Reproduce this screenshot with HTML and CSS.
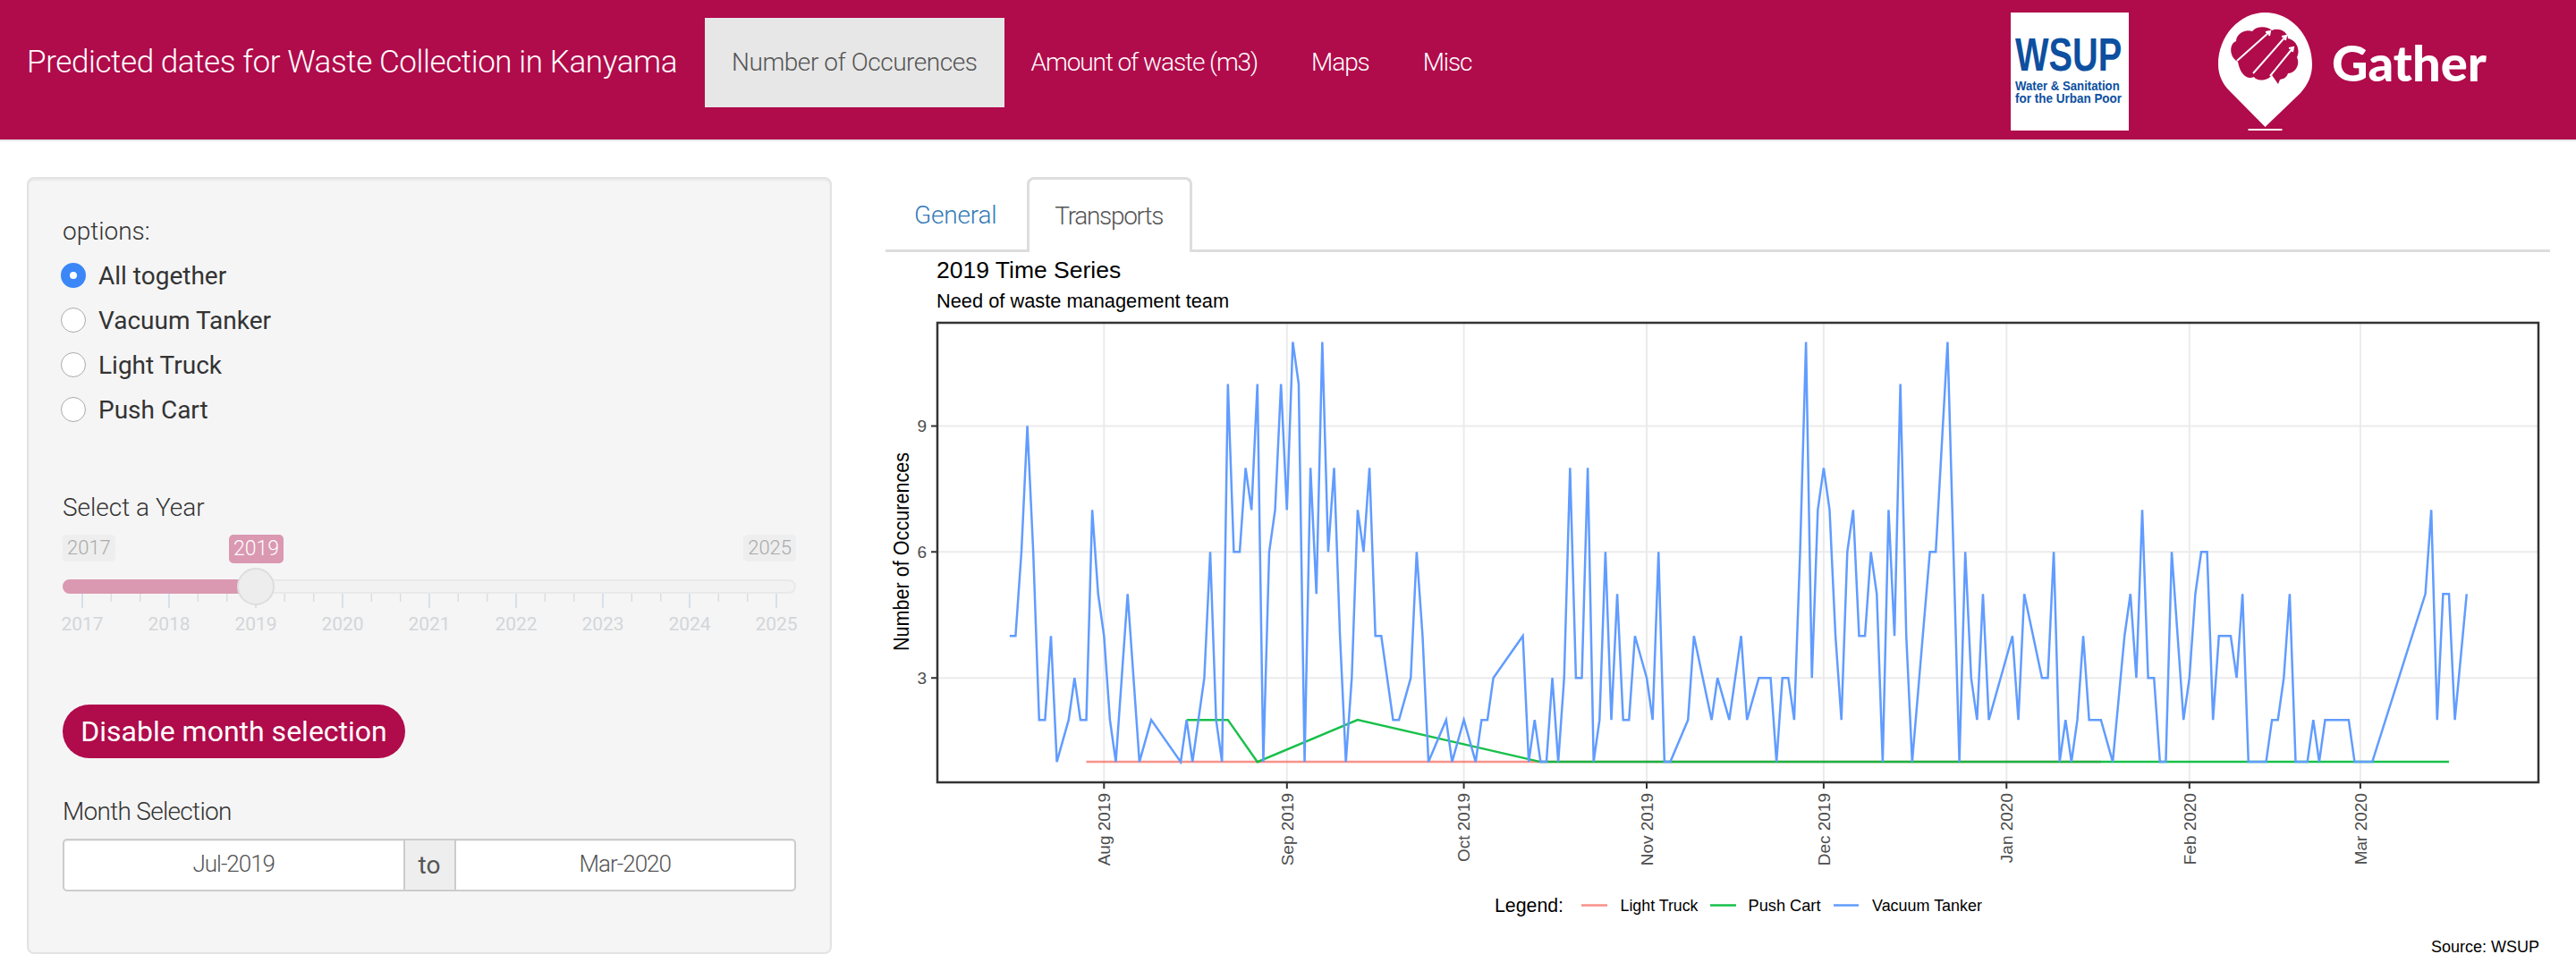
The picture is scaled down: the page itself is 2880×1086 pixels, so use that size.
FILE: index.html
```html
<!DOCTYPE html>
<html lang="en">
<head>
    <meta charset="UTF-8">
    <title>Predicted dates for Waste Collection in Kanyama</title>
    <link rel="stylesheet" href="styles.css">
</head>
<body>
    <nav class="navbar">
        <div class="brand">Predicted dates for Waste Collection in Kanyama</div>
        <a class="nav-item active">Number of Occurences</a>
        <a class="nav-item">Amount of waste (m3)</a>
        <a class="nav-item">Maps</a>
        <a class="nav-item">Misc</a>
        <div class="wsup-logo">
            <svg viewBox="0 0 132 132" width="132" height="132">
                <text class="wsup-big" transform="translate(5 65) scale(.78 1)">WSUP</text>
                <text class="wsup-small" transform="translate(5 87) scale(.88 1)">Water &amp; Sanitation</text>
                <text class="wsup-small" transform="translate(5 101) scale(.9 1)">for the Urban Poor</text>
            </svg>
        </div>
        <div class="gather-logo">
            <svg class="pin" viewBox="0 0 105 132" width="105" height="132">
                <path class="pin-body" d="M52.5 0C81 0 105 26 105 58C105 71 100 81 92 90L52.5 128L13 88C5 80 0 70 0 58C0 26 24 0 52.5 0Z"/>
                <rect class="pin-body" x="33.500" y="130" width="38" height="2"/>
                <path class="pin-brain" d="M22 55C12 50 12 35 20 32C20 24 30 18 38 21C44 14 56 16 60 20C68 16 78 22 78 29C88 31 92 42 88 50C92 58 86 68 78 68C76 74 72 74 69 75L67 80L60 70C54 78 42 76 40 72C32 76 24 68 22 55Z"/>
                <path class="pin-arrow" d="M21 54L58 21M53 22L58 21L57 26M39 68L76 26M71 27L76 26L75 31M58 71L84 39M79 40L84 39L83 44"/>
            </svg>
            <span class="gather-name">Gather</span>
        </div>
    </nav>

    <div class="content">
        <aside class="well">
            <div class="field-label options-label">options:</div>
            <label class="radio"><input type="radio" name="opt" checked>All together</label>
            <label class="radio"><input type="radio" name="opt">Vacuum Tanker</label>
            <label class="radio"><input type="radio" name="opt">Light Truck</label>
            <label class="radio"><input type="radio" name="opt">Push Cart</label>

            <div class="field-label year-label">Select a Year</div>
            <div class="slider">
                <div class="slider-ends">
                    <span class="slider-end">2017</span>
                    <span class="slider-end">2025</span>
                </div>
                <span class="slider-value">2019</span>
                <div class="slider-track">
                    <div class="slider-fill"></div>
                    <div class="slider-handle"></div>
                </div>
                <svg class="slider-ticks" viewBox="0 0 820 16" width="820" height="16">
                    <path class="tick-major" d="M22 0V16M119 0V16M216 0V16M313 0V16M410 0V16M507 0V16M604 0V16M701 0V16M798 0V16"/>
                    <path class="tick-minor" d="M54.300 0V9M86.700 0V9M151.300 0V9M183.700 0V9M248.300 0V9M280.700 0V9M345.300 0V9M377.700 0V9M442.300 0V9M474.700 0V9M539.300 0V9M571.700 0V9M636.300 0V9M668.700 0V9M733.300 0V9M765.700 0V9"/>
                </svg>
                <div class="slider-labels">
                    <span>2017</span><span>2018</span><span>2019</span><span>2020</span><span>2021</span><span>2022</span><span>2023</span><span>2024</span><span>2025</span>
                </div>
            </div>

            <button class="pill">Disable month selection</button>

            <div class="field-label month-label">Month Selection</div>
            <div class="date-range">
                <div class="date-input">Jul-2019</div>
                <div class="date-to">to</div>
                <div class="date-input">Mar-2020</div>
            </div>
        </aside>

        <main class="tab-area">
            <div class="tabs">
                <a class="tab">General</a>
                <a class="tab selected">Transports</a>
            </div>
            <svg class="plot" viewBox="990 282 1861 804" width="1861" height="804">
                <text class="plot-title" x="1047" y="311">2019 Time Series</text>
                <text class="plot-sub" x="1047" y="344">Need of waste management team</text>

                <path class="grid" d="M1048 476.400H2838M1048 617.300H2838M1048 758.200H2838M1234.300 361V875M1438.800 361V875M1636.600 361V875M1841 361V875M2038.900 361V875M2243.300 361V875M2447.800 361V875M2638.900 361V875"/>

                <g transform="translate(1128.8 899.06) scale(6.595 -46.96)">
                    <polyline class="line red" points="13,1 185,1"/>
                    <polyline class="line green" points="30,2 37,2 42,1 59,2 90,1 244,1"/>
                    <polyline class="line blue" points="0,4 1,4 2,6 3,9 4,6 5,2 6,2 7,4 8,1 10,2 11,3 12,2 13,2 14,7 15,5 16,4 17,2 18,1 19,3 20,5 21,3 22,1 24,2 29,1 30,2 31,1 33,3 34,6 35,2 36,1 37,10 38,6 39,6 40,8 41,7 42,10 43,1 44,6 45,7 46,10 47,7 48,11 49,10 50,1 51,8 52,5 53,11 54,6 55,8 56,4 57,1 58,3 59,7 60,6 61,8 62,4 63,4 65,2 66,2 68,3 69,6 70,4 71,1 74,2 75,1 77,2 79,1 80,2 81,2 82,3 87,4 88,1 89,2 90,1 91,1 92,3 93,1 94,3 95,8 96,3 97,3 98,8 99,1 100,2 101,6 102,2 103,5 104,2 105,2 106,4 108,3 109,2 110,6 111,1 112,1 115,2 116,4 119,2 120,3 122,2 124,4 125,2 127,3 129,3 130,1 131,3 132,3 133,2 134,6 135,11 136,3 137,7 138,8 139,7 140,4 141,2 142,6 143,7 144,4 145,4 146,6 147,5 148,1 149,7 150,4 151,10 152,4 153,1 156,6 157,6 159,11 160,6 161,1 162,6 163,3 164,2 165,5 166,2 170,4 171,2 172,5 175,3 176,3 177,6 178,1 179,2 180,1 181,2 182,4 183,2 185,2 187,1 189,4 190,5 191,3 192,7 193,3 194,3 195,1 196,1 197,6 199,2 200,3 201,5 202,6 203,6 204,2 205,4 207,4 208,3 209,5 210,1 213,1 214,2 215,2 216,3 217,5 218,1 220,1 221,2 222,1 223,2 227,2 228,1 231,1 240,5 241,7 242,2 243,5 244,5 245,2 247,5"/>
                </g>

                <rect class="frame" x="1048" y="361" width="1790" height="514"/>
                <path class="ticks" d="M1041 476.400H1048M1041 617.300H1048M1041 758.200H1048M1234.300 875V882M1438.800 875V882M1636.600 875V882M1841 875V882M2038.900 875V882M2243.300 875V882M2447.800 875V882M2638.900 875V882"/>

                <text class="axis-y" x="1036" y="483">9</text>
                <text class="axis-y" x="1036" y="624">6</text>
                <text class="axis-y" x="1036" y="765">3</text>
                <text class="axis-title" transform="translate(1016 617) rotate(-90)" textLength="222" lengthAdjust="spacingAndGlyphs">Number of Occurences</text>

                <text class="axis-x" transform="translate(1241 887) rotate(-90)">Aug 2019</text>
                <text class="axis-x" transform="translate(1445.500 887) rotate(-90)">Sep 2019</text>
                <text class="axis-x" transform="translate(1643.300 887) rotate(-90)">Oct 2019</text>
                <text class="axis-x" transform="translate(1847.700 887) rotate(-90)">Nov 2019</text>
                <text class="axis-x" transform="translate(2045.600 887) rotate(-90)">Dec 2019</text>
                <text class="axis-x" transform="translate(2250 887) rotate(-90)">Jan 2020</text>
                <text class="axis-x" transform="translate(2454.500 887) rotate(-90)">Feb 2020</text>
                <text class="axis-x" transform="translate(2645.600 887) rotate(-90)">Mar 2020</text>

                <text class="legend-title" x="1671" y="1020" textLength="77" lengthAdjust="spacingAndGlyphs">Legend:</text>
                <path class="key red" d="M1768 1012.500H1797"/>
                <text class="legend-item" x="1811.500" y="1019" textLength="87" lengthAdjust="spacingAndGlyphs">Light Truck</text>
                <path class="key green" d="M1912 1012.500H1941"/>
                <text class="legend-item" x="1954.500" y="1019" textLength="81" lengthAdjust="spacingAndGlyphs">Push Cart</text>
                <path class="key blue" d="M2050 1012.500H2078"/>
                <text class="legend-item" x="2093" y="1019" textLength="123" lengthAdjust="spacingAndGlyphs">Vacuum Tanker</text>

                <text class="legend-item" x="2718" y="1065" textLength="121" lengthAdjust="spacingAndGlyphs">Source: WSUP</text>
            </svg>
        </main>
    </div>
</body>
</html>
```

FILE: styles.css
```css
body {
    margin: 0;
    width: 2880px;
    height: 1086px;
    overflow: hidden;
    background-color: white;
    font-family: Roboto, "Liberation Sans", sans-serif;
    font-weight: 300;
    color: #333;
}

.navbar {
    display: flex;
    align-items: flex-start;
    height: 156px;
    background-color: #b00b4b;
    border-bottom: 2px solid #e7e7e7;
}
.brand {
    margin: 20px 31px 0 30px;
    line-height: 100px;
    font-size: 35px;
    letter-spacing: -.4px;
    color: white;
    white-space: nowrap;
}
.nav-item {
    margin-top: 20px;
    padding: 0 30px;
    height: 100px;
    line-height: 100px;
    font-size: 28px;
    letter-spacing: -1.1px;
    color: white;
    white-space: nowrap;
}
.nav-item.active {
    letter-spacing: -.45px;
    background-color: #e7e7e7;
    color: #555;
}
.wsup-logo {
    margin: 14px 100px 0 auto;
    width: 132px;
    height: 132px;
    background-color: white;
}
.wsup-big {
    font-family: "Liberation Sans", sans-serif;
    font-weight: 700;
    font-size: 51px;
    fill: #0d4fa0;
}
.wsup-small {
    font-family: "Liberation Sans", sans-serif;
    font-weight: 700;
    font-size: 15px;
    fill: #0d4fa0;
}
.gather-logo {
    display: flex;
    align-items: center;
    width: 400px;
    margin-top: 14px;
}
.pin {
    display: block;
}
.pin-body {
    fill: white;
}
.pin-brain {
    fill: #b00b4b;
}
.pin-arrow {
    fill: none;
    stroke: white;
    stroke-width: 2;
}
.gather-name {
    margin: -22px 0 0 22px;
    font-family: Lato, sans-serif;
    font-weight: 900;
    font-size: 56px;
    color: white;
}

.content {
    display: flex;
    align-items: flex-start;
    padding: 40px 0 0 30px;
}
.well {
    box-sizing: border-box;
    width: 900px;
    height: 869px;
    padding: 0 38px;
    background-color: #f5f5f5;
    border: 2px solid #e3e3e3;
    border-radius: 8px;
    box-shadow: inset 0 2px 2px rgba(0,0,0,.05);
}
.field-label {
    font-size: 28px;
    line-height: 40px;
}
.options-label {
    margin-top: 39px;
    margin-bottom: 4px;
}
.radio {
    display: flex;
    align-items: center;
    height: 50px;
    font-size: 28px;
    font-weight: 400;
}
.radio input {
    appearance: none;
    box-sizing: border-box;
    width: 28px;
    height: 28px;
    margin: 0 14px 0 -2px;
    background-color: white;
    border: 1px solid #aaa;
    border-radius: 50%;
}
.radio input:checked {
    border: 10px solid #3b87f7;
}
.year-label {
    margin-top: 65px;
}

.slider {
    position: relative;
    width: 820px;
    height: 120px;
    margin-top: 10px;
}
.slider-ends {
    display: flex;
    justify-content: space-between;
}
.slider-end {
    padding: 0 5px;
    line-height: 30px;
    font-size: 22px;
    color: #aaa;
    background-color: #eee;
    border-radius: 5px;
}
.slider-value {
    position: absolute;
    left: 186px;
    top: 0;
    padding: 0 5px;
    line-height: 32px;
    font-size: 23px;
    color: white;
    background-color: #da98b1;
    border-radius: 5px;
}
.slider-track {
    position: relative;
    box-sizing: border-box;
    height: 16px;
    margin-top: 20px;
    background-color: #f2f2f2;
    border: 2px solid #e9e9e9;
    border-radius: 8px;
}
.slider-fill {
    position: absolute;
    left: -2px;
    top: -2px;
    width: 210px;
    height: 16px;
    background-color: #da98b1;
    border-radius: 8px 0 0 8px;
}
.slider-handle {
    position: absolute;
    left: 193px;
    top: -15px;
    box-sizing: border-box;
    width: 42px;
    height: 42px;
    background-color: #ededed;
    border: 2px solid #ddd;
    border-radius: 50%;
}
.slider-ticks {
    display: block;
}
.tick-major {
    stroke: #d5e1ec;
    stroke-width: 2;
}
.tick-minor {
    stroke: #ddd;
    stroke-width: 1.500;
}
.slider-labels {
    display: flex;
    margin: 3px -26.500px 0;
    font-size: 21px;
    font-weight: 400;
    line-height: 30px;
    color: #d3d6d9;
}
.slider-labels span {
    flex: 1;
    text-align: center;
}

.pill {
    display: block;
    margin-top: 70px;
    width: 383px;
    height: 60px;
    padding: 0;
    font-family: inherit;
    font-size: 32px;
    font-weight: 400;
    color: white;
    background-color: #b00b4b;
    border: none;
    border-radius: 30px;
}
.month-label {
    margin-top: 40px;
    letter-spacing: -.7px;
}
.date-range {
    display: flex;
    box-sizing: border-box;
    width: 820px;
    height: 59px;
    margin-top: 10px;
    background-color: white;
    border: 2px solid #ccc;
    border-radius: 5px;
    box-shadow: inset 0 1px 1px rgba(0,0,0,.075);
}
.date-input {
    flex: 1;
    text-align: center;
    line-height: 53px;
    font-size: 26px;
    letter-spacing: -1px;
    color: #555;
}
.date-to {
    box-sizing: border-box;
    width: 59px;
    text-align: center;
    line-height: 55px;
    font-size: 28px;
    font-weight: 400;
    color: #555;
    background-color: #eee;
    border-left: 2px solid #ccc;
    border-right: 2px solid #ccc;
}

.tab-area {
    margin-left: 60px;
}
.tabs {
    display: flex;
    box-sizing: border-box;
    width: 1861px;
    height: 84px;
    padding-left: 2px;
    border-bottom: 3px solid #ddd;
}
.tab {
    box-sizing: border-box;
    height: 84px;
    padding: 0 30px;
    line-height: 86px;
    font-size: 28px;
    letter-spacing: -.2px;
    color: #337ab7;
}
.tab.selected {
    margin-left: 4px;
    padding: 0 30px 0 28px;
    line-height: 81px;
    letter-spacing: -1.3px;
    color: #555;
    background-color: white;
    border: 3px solid #ddd;
    border-bottom: none;
    border-radius: 8px 8px 0 0;
}

.plot {
    display: block;
    font-family: "Liberation Sans", sans-serif;
    font-weight: 400;
}
.plot-title {
    font-size: 26.500px;
    fill: black;
}
.plot-sub {
    font-size: 21.800px;
    fill: black;
}
.grid {
    fill: none;
    stroke: #ebebeb;
    stroke-width: 2;
}
.line, .key {
    fill: none;
    stroke-width: 2.500;
    vector-effect: non-scaling-stroke;
}
.red {
    stroke: #f8766d;
    opacity: .8;
}
.green {
    stroke: #00ba38;
    opacity: .9;
}
.blue {
    stroke: #619cff;
}
.frame {
    fill: none;
    stroke: #333;
    stroke-width: 2.500;
}
.ticks {
    fill: none;
    stroke: #333;
    stroke-width: 2;
}
.axis-y {
    font-size: 19px;
    text-anchor: end;
    fill: #4d4d4d;
}
.axis-x {
    font-size: 19px;
    text-anchor: end;
    fill: #4d4d4d;
}
.axis-title {
    font-size: 23px;
    text-anchor: middle;
    fill: black;
}
.legend-title {
    font-size: 22px;
    fill: black;
}
.legend-item {
    font-size: 18px;
    fill: black;
}
```
